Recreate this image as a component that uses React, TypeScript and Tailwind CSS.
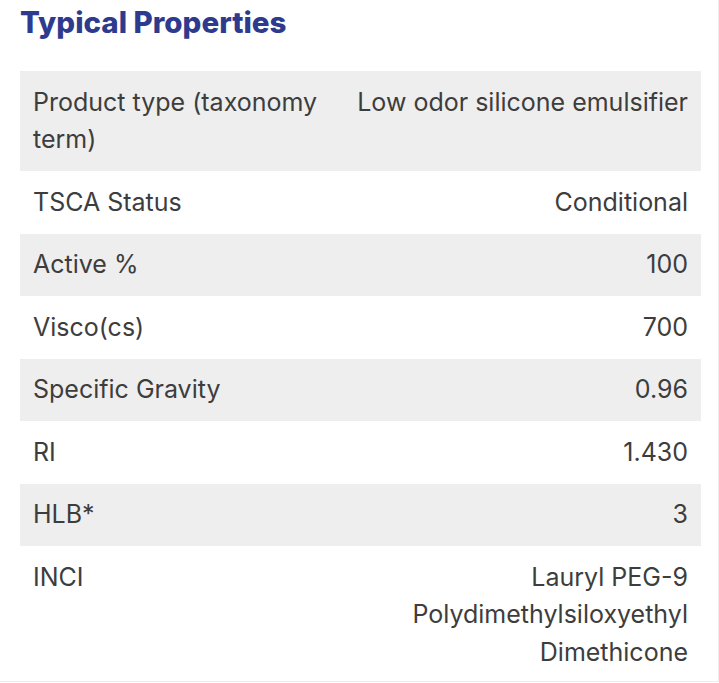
const rows: { label: string; value: string }[] = [
  { label: "Product type (taxonomy term)", value: "Low odor silicone emulsifier" },
  { label: "TSCA Status", value: "Conditional" },
  { label: "Active %", value: "100" },
  { label: "Visco(cs)", value: "700" },
  { label: "Specific Gravity", value: "0.96" },
  { label: "RI", value: "1.430" },
  { label: "HLB*", value: "3" },
  { label: "INCI", value: "Lauryl PEG-9 Polydimethylsiloxyethyl Dimethicone" },
];

export default function App() {
  return (
    <div className="w-[719px] h-[682px] overflow-hidden border-r border-b border-[#ededed] bg-white pl-[20px] font-['Inter',sans-serif]">
      <h2 className="text-[29.5px] leading-[45px] font-extrabold text-[#2e3a8e] mb-[26px]">
        Typical Properties
      </h2>
      <div className="w-[681px] flex flex-col text-[25px] leading-[37.5px] text-[#3d3d3d]">
        {rows.map((r, i) => (
          <div
            key={r.label}
            className={`grid grid-cols-[320px_1fr] ${i % 2 === 0 ? "bg-[#eeeeee]" : "bg-white"}`}
          >
            <div className={`pl-[13px] pr-[13px] pt-[12.5px] ${i === rows.length - 1 ? "pb-[10px]" : "pb-[12.5px]"}`}>
              {r.label}
            </div>
            <div className={`pl-[13px] pr-[13px] pt-[12.5px] text-right ${i === rows.length - 1 ? "pb-[10px]" : "pb-[12.5px]"}`}>
              {r.value}
            </div>
          </div>
        ))}
      </div>
    </div>
  );
}
